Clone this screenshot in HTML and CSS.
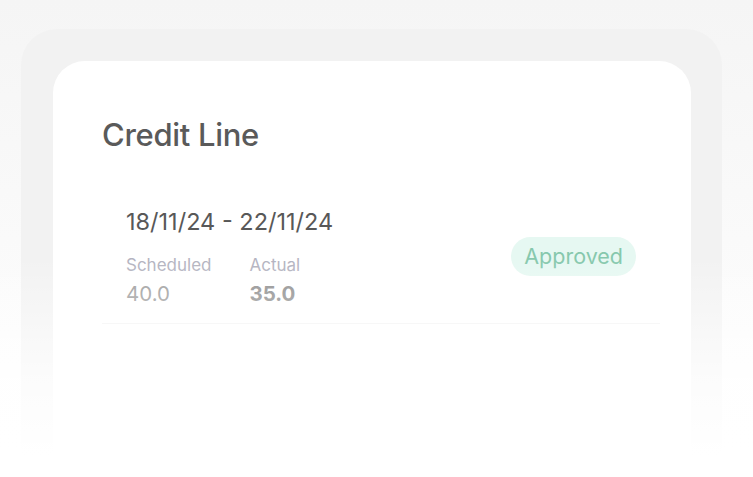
FILE: index.html
```html
<!DOCTYPE html>
<html>
<head>
<meta charset="utf-8">
<link rel="stylesheet" href="styles.css">
</head>
<body>
<div class="stage">
  <div class="panel">
    <div class="card">
      <h1 class="title">Credit Line</h1>
      <div class="list">
        <div class="row">
          <div class="info">
            <div class="dates">18/11/24 - 22/11/24</div>
            <div class="stats">
              <div class="stat">
                <div class="label">Scheduled</div>
                <div class="value">40.0</div>
              </div>
              <div class="stat">
                <div class="label">Actual</div>
                <div class="value strong">35.0</div>
              </div>
            </div>
          </div>
          <span class="badge">Approved</span>
        </div>
      </div>
    </div>
  </div>
  <div class="fade"></div>
</div>
</body>
</html>
```

FILE: styles.css
```css
html, body {
  margin: 0;
  padding: 0;
}
body {
  width: 753px;
  height: 477px;
  overflow: hidden;
  font-family: Inter, "Noto Sans", sans-serif;
  background: linear-gradient(180deg, #f5f5f5 0%, #f9f9f9 40%, #ffffff 100%);
}
.stage {
  position: relative;
  width: 753px;
  height: 477px;
  padding-top: 29px;
  box-sizing: border-box;
  overflow: hidden;
}
.panel {
  margin-left: 21px;
  width: 701px;
  height: 426px;
  border-radius: 36px 36px 0 0;
  background: #f2f2f2;
  padding: 32px 31px 0 32px;
  box-sizing: border-box;
}
.card {
  width: 638px;
  height: 394px;
  border-radius: 32px 32px 0 0;
  background: #ffffff;
  padding: 56px 31px 0 49px;
  box-sizing: border-box;
}
.title {
  margin: 0;
  font-size: 31px;
  font-weight: 500;
  color: #5a5a5a;
  letter-spacing: -0.3px;
  line-height: 36px;
}
.list {
  margin-top: 55px;
}
.row {
  display: flex;
  align-items: center;
  justify-content: space-between;
  padding: 0 24px 16px 24px;
  border-bottom: 1.5px solid #f1f1f1;
}
.dates {
  font-size: 23.5px;
  color: #585858;
  line-height: 28px;
}
.stats {
  display: flex;
  gap: 38px;
  margin-top: 18px;
}
.label {
  font-size: 17px;
  color: #b3b3bf;
  line-height: 22px;
}
.value {
  font-size: 20.5px;
  color: #9a9a9a;
  line-height: 26px;
  margin-top: 5px;
}
.value.strong {
  font-weight: 700;
  color: #8c8c8c;
}
.badge {
  display: inline-block;
  margin-top: -2px;
  background: #e6f8f2;
  color: #86c8ad;
  font-size: 21.5px;
  line-height: 39px;
  padding: 0 13px;
  border-radius: 20px;
}
.fade {
  position: absolute;
  left: 0;
  right: 0;
  bottom: 0;
  height: 220px;
  background: linear-gradient(180deg, rgba(255,255,255,0) 0%, rgba(255,255,255,0.75) 55%, #ffffff 90%);
  pointer-events: none;
}
```
